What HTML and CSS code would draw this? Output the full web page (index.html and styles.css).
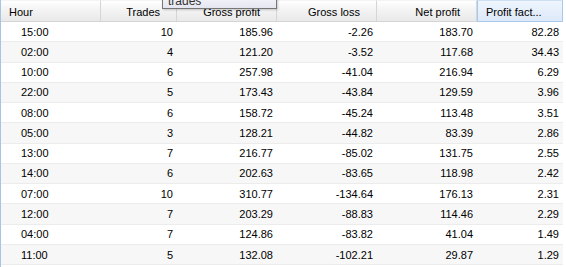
FILE: index.html
```html
<!DOCTYPE html>
<html lang="en">
<head>
    <meta charset="UTF-8">
    <title>Trades by hour</title>
    <link rel="stylesheet" href="styles.css">
</head>
<body>

<div class="grid">
    <table class="report">
        <thead>
            <tr>
                <th class="left w-hour">Hour</th>
                <th class="w-trades">Trades</th>
                <th class="w-num">Gross profit</th>
                <th class="w-num">Gross loss</th>
                <th class="w-num">Net profit</th>
                <th class="left hot w-pf">Profit fact...</th>
            </tr>
        </thead>
        <tbody>
            <tr><td class="hour">15:00</td><td>10</td><td>185.96</td><td>-2.26</td><td>183.70</td><td>82.28</td></tr>
            <tr><td class="hour">02:00</td><td>4</td><td>121.20</td><td>-3.52</td><td>117.68</td><td>34.43</td></tr>
            <tr><td class="hour">10:00</td><td>6</td><td>257.98</td><td>-41.04</td><td>216.94</td><td>6.29</td></tr>
            <tr><td class="hour">22:00</td><td>5</td><td>173.43</td><td>-43.84</td><td>129.59</td><td>3.96</td></tr>
            <tr><td class="hour">08:00</td><td>6</td><td>158.72</td><td>-45.24</td><td>113.48</td><td>3.51</td></tr>
            <tr><td class="hour">05:00</td><td>3</td><td>128.21</td><td>-44.82</td><td>83.39</td><td>2.86</td></tr>
            <tr><td class="hour">13:00</td><td>7</td><td>216.77</td><td>-85.02</td><td>131.75</td><td>2.55</td></tr>
            <tr><td class="hour">14:00</td><td>6</td><td>202.63</td><td>-83.65</td><td>118.98</td><td>2.42</td></tr>
            <tr><td class="hour">07:00</td><td>10</td><td>310.77</td><td>-134.64</td><td>176.13</td><td>2.31</td></tr>
            <tr><td class="hour">12:00</td><td>7</td><td>203.29</td><td>-88.83</td><td>114.46</td><td>2.29</td></tr>
            <tr><td class="hour">04:00</td><td>7</td><td>124.86</td><td>-83.82</td><td>41.04</td><td>1.49</td></tr>
            <tr><td class="hour">11:00</td><td>5</td><td>132.08</td><td>-102.21</td><td>29.87</td><td>1.29</td></tr>
        </tbody>
    </table>
    <div class="tip">trades</div>
</div>

</body>
</html>
```

FILE: styles.css
```css
body {
    margin: 0;
    padding: 0;
    background: #fff;
    font-family: "Liberation Sans", Arial, sans-serif;
    font-size: 11px;
    color: #000;
}
.grid {
    position: relative;
    width: 562px;
    height: 267px;
    border-left: 1px solid #a9c3e0;
    overflow: hidden;
}
.report {
    width: 562px;
    border-collapse: separate;
    border-spacing: 0;
    table-layout: fixed;
}
.report th,
.report td {
    box-sizing: border-box;
}
.w-hour { width: 100px; }
.w-trades { width: 76px; }
.w-num { width: 100px; }
.w-pf { width: 86px; }
.report th {
    height: 22px;
    padding: 2px 16px 0 8px;
    border-top: 1px solid #f4f4f4;
    border-bottom: 1px solid #d5d5d5;
    border-right: 1px solid #d5d5d5;
    background: linear-gradient(#ffffff, #f3f3f3 45%, #e9e9e9);
    font-weight: normal;
    text-align: right;
    white-space: nowrap;
    overflow: hidden;
    color: #000;
}
.report th.left {
    text-align: left;
}
.report th.hot {
    background: linear-gradient(#eef5fd, #dde9f9);
    border: 1px solid #a8c8ee;
    border-top-color: #cfe0f5;
}
.report td {
    height: 20.27px;
    padding: 0 4px;
    border-bottom: 1px solid #ececec;
    text-align: right;
    white-space: nowrap;
}
.report td.hour {
    text-align: left;
    padding-left: 20px;
}
.report tbody tr:nth-child(even) td {
    background: #f7f7f7;
}
.tip {
    position: absolute;
    left: 161px;
    top: -10px;
    width: 108px;
    height: 14px;
    padding: 4px 0 0 5px;
    box-sizing: content-box;
    border: 1px solid #767676;
    border-top: 0;
    background: linear-gradient(#ffffff, #e4e5f0);
    font-size: 12px;
    line-height: 14px;
    color: #333;
    box-shadow: 1px 1px 2px rgba(0, 0, 0, 0.2);
}
```
